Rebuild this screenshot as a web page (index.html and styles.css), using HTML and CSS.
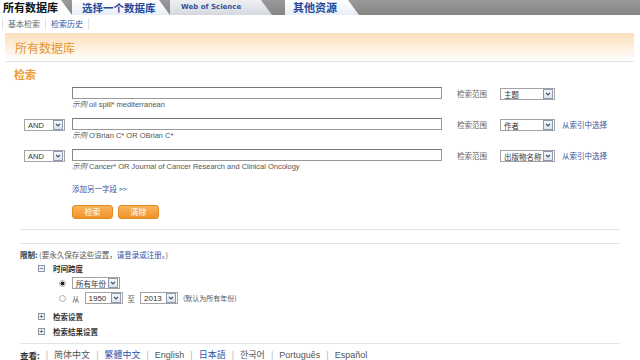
FILE: index.html
```html
<!DOCTYPE html>
<html lang="zh-CN">

<head>
    <meta charset="UTF-8" />
    <meta name="viewport" content="width=device-width, initial-scale=1.0" />
    <title>所有数据库 - 基本检索</title>
    <link rel="stylesheet" href="styles.css">
</head>

<body>
    <!-- 顶部标签 -->
    <div class="tabs">
        <a class="tab active">所有数据库</a>
        <a class="tab pick">选择一个数据库</a>
        <a class="tab wos">Web of Science</a>
        <a class="tab other">其他资源</a>
    </div>

    <div class="subtabs">
        <a class="cur">基本检索</a>
        <a>检索历史</a>
    </div>

    <div class="banner">所有数据库</div>

    <div class="main">
        <h2 class="title">检索</h2>

        <div class="rows">
            <div class="row">
                <div class="op"></div>
                <div class="field">
                    <div class="input"></div>
                    <div class="eg"><i>示例</i> oil spill* mediterranean</div>
                </div>
                <span class="scope">检索范围</span>
                <span class="sel sel-scope"><span class="val">主题</span><span class="arrow"><svg viewBox="0 0 10 10"><path d="M2.5 3.5 L5 6.2 L7.5 3.5" /></svg></span></span>
            </div>
            <div class="row">
                <span class="sel op"><span class="val">AND</span><span class="arrow"><svg viewBox="0 0 10 10"><path d="M2.5 3.5 L5 6.2 L7.5 3.5" /></svg></span></span>
                <div class="field">
                    <div class="input"></div>
                    <div class="eg"><i>示例</i> O'Brian C* OR OBrian C*</div>
                </div>
                <span class="scope">检索范围</span>
                <span class="sel sel-scope"><span class="val">作者</span><span class="arrow"><svg viewBox="0 0 10 10"><path d="M2.5 3.5 L5 6.2 L7.5 3.5" /></svg></span></span>
                <a class="link">从索引中选择</a>
            </div>
            <div class="row">
                <span class="sel op"><span class="val">AND</span><span class="arrow"><svg viewBox="0 0 10 10"><path d="M2.5 3.5 L5 6.2 L7.5 3.5" /></svg></span></span>
                <div class="field">
                    <div class="input"></div>
                    <div class="eg"><i>示例</i> Cancer* OR Journal of Cancer Research and Clinical Oncology</div>
                </div>
                <span class="scope">检索范围</span>
                <span class="sel sel-scope"><span class="val">出版物名称</span><span class="arrow"><svg viewBox="0 0 10 10"><path d="M2.5 3.5 L5 6.2 L7.5 3.5" /></svg></span></span>
                <a class="link">从索引中选择</a>
            </div>
        </div>

        <a class="add">添加另一字段 &gt;&gt;</a>

        <div class="buttons">
            <button class="btn">检索</button>
            <button class="btn">清除</button>
        </div>

        <hr class="rule" />
        <hr class="rule second" />

        <div class="limits">
            <b>限制:</b> (要永久保存这些设置，<a>请登录或注册</a>。)
        </div>
        <div class="group"><span class="box">−</span><b>时间跨度</b></div>
        <div class="opt">
            <span class="radio on"></span>
            <span class="sel sel-all"><span class="val">所有年份</span><span class="arrow"><svg viewBox="0 0 10 10"><path d="M2.5 3.5 L5 6.2 L7.5 3.5" /></svg></span></span>
        </div>
        <div class="opt">
            <span class="radio"></span>
            <span class="word">从</span>
            <span class="sel sel-year"><span class="val">1950</span><span class="arrow"><svg viewBox="0 0 10 10"><path d="M2.5 3.5 L5 6.2 L7.5 3.5" /></svg></span></span>
            <span class="word">至</span>
            <span class="sel sel-year"><span class="val">2013</span><span class="arrow"><svg viewBox="0 0 10 10"><path d="M2.5 3.5 L5 6.2 L7.5 3.5" /></svg></span></span>
            <span class="note">(默认为所有年份)</span>
        </div>
        <div class="group closed"><span class="box">+</span><b>检索设置</b></div>
        <div class="group closed"><span class="box">+</span><b>检索结果设置</b></div>

        <hr class="rule foot-rule" />

        <div class="langs">
            <b>查看:</b>
            <span class="sep">|</span><span class="cur">简体中文</span>
            <span class="sep">|</span><a>繁體中文</a>
            <span class="sep">|</span><span class="cur">English</span>
            <span class="sep">|</span><a>日本語</a>
            <span class="sep">|</span><span class="cur">한국어</span>
            <span class="sep">|</span><span class="cur">Português</span>
            <span class="sep">|</span><span class="cur">Español</span>
        </div>
    </div>
</body>

</html>
```

FILE: styles.css
```css
html {
    box-sizing: border-box;
}

*,
*:before,
*:after {
    box-sizing: inherit;
}

body {
    margin: 0;
    width: 640px;
    height: 360px;
    overflow: hidden;
    font-family: "Liberation Sans", "Noto Sans CJK SC", sans-serif;
    font-size: 8px;
    color: #555;
    background: #fff;
}

a {
    color: #3453a3;
    text-decoration: none;
}

/* 顶部标签 */
.tabs {
    display: flex;
    height: 15px;
    overflow: hidden;
    background: linear-gradient(#9a9a9a, #858585);
}

.tab {
    display: flex;
    flex-shrink: 0;
    align-items: center;
    height: 15px;
    padding: 0 10px 0 10px;
    white-space: nowrap;
    font-family: "Noto Sans CJK SC", sans-serif;
    font-weight: bold;
    font-size: 10.5px;
    line-height: 15px;
    color: #28489a;
    background: linear-gradient(#fff, #e9eef6);
    clip-path: polygon(0 0, calc(100% - 11px) 0, 100% 100%, 0 100%);
}

.tab.active {
    width: 72px;
    padding-left: 3px;
    font-size: 11px;
    color: #111;
    background: #fff;
}

.tab.pick {
    width: 98px;
}

.tab.wos {
    width: 102px;
    padding-left: 11px;
    font-family: "DejaVu Sans", sans-serif;
    font-size: 7px;
    color: #34539a;
    background: linear-gradient(#eef0f3, #d5d9df);
}

.tab.other {
    width: 74px;
    margin-left: 13px;
    padding-left: 8px;
    font-size: 11px;
}

.subtabs {
    display: flex;
    align-items: center;
    height: 18px;
    padding-left: 2px;
    font-family: "Noto Sans CJK SC", sans-serif;
    font-size: 8px;
}

.subtabs a {
    padding: 0 5px;
    line-height: 12px;
    border-left: 1px solid #e4e4e4;
    border-right: 1px solid #e4e4e4;
}

.subtabs a+a {
    border-left: 0;
}

.subtabs .cur {
    color: #666;
}

.banner {
    display: flex;
    align-items: center;
    height: 29px;
    margin: 0 6px 0 5px;
    padding-left: 10px;
    font-family: "Noto Sans CJK SC", sans-serif;
    font-size: 12px;
    color: #e8952f;
    background: linear-gradient(#fcdfba, #fef3e4 60%, #fff);
    border-bottom: 1px solid #e3e3e3;
}

.main {
    padding: 0 10px 0 14px;
}

.title {
    margin: 6px 0 0;
    font-family: "Noto Sans CJK SC", sans-serif;
    font-size: 11px;
    line-height: 12px;
    color: #ea9a36;
}

/* 检索行 */
.rows {
    margin-top: 7px;
}

.row {
    display: flex;
    align-items: flex-start;
    height: 31px;
}

.op {
    width: 41px;
    margin: 1px 7px 0 10px;
}

.field {
    width: 370px;
}

.input {
    height: 12px;
    border: 1px solid #999;
    border-top-color: #777;
    border-left-color: #888;
}

.eg {
    margin-top: 1px;
    font-size: 7.5px;
    line-height: 9px;
    color: #555;
}

.eg i {
    color: #666;
}

.scope {
    width: 43px;
    margin: 1px 0 0 15px;
    line-height: 12px;
    font-family: "Noto Sans CJK SC", sans-serif;
    font-size: 7.5px;
    color: #666;
}

.sel {
    display: inline-flex;
    align-items: center;
    justify-content: space-between;
    height: 12px;
    padding-left: 3px;
    border: 1px solid #a3a3a3;
    background: #fff;
    font-size: 7.5px;
    color: #333;
}

.sel .val {
    white-space: nowrap;
    font-family: "Liberation Sans", "Noto Sans CJK SC", sans-serif;
}

.sel .arrow {
    display: flex;
    width: 10px;
    height: 10px;
    margin-right: 1px;
    border: 1px solid #8c9bb3;
    background: linear-gradient(#f4f6f9, #dde3eb);
}

.sel .arrow svg {
    width: 8px;
    height: 8px;
}

.sel .arrow path {
    fill: none;
    stroke: #3e4f72;
    stroke-width: 1.5;
}

.sel-scope {
    width: 55px;
    margin-top: 1px;
}

.link {
    margin: 0 0 0 7px;
    line-height: 13px;
    font-family: "Noto Sans CJK SC", sans-serif;
    font-size: 7.5px;
}

.add {
    display: block;
    margin: 4px 0 0 58px;
    line-height: 10px;
    font-family: "Noto Sans CJK SC", sans-serif;
    font-size: 7.5px;
}

.buttons {
    display: flex;
    gap: 5px;
    margin: 11px 0 0 58px;
}

.btn {
    width: 41px;
    height: 14px;
    padding: 0;
    border: 1px solid #e08a24;
    border-radius: 3px;
    background: linear-gradient(#f9b35a, #f0922a);
    color: #fff;
    font-family: "Noto Sans CJK SC", sans-serif;
    font-size: 8px;
    line-height: 12px;
}

.rule {
    height: 1px;
    margin: 10px 10px 0 6px;
    border: 0;
    background: #e3e3e3;
}

.rule.second {
    margin-top: 13px;
}

/* 限制 */
.limits {
    margin: 6px 0 0 6px;
    line-height: 10px;
    font-family: "Noto Sans CJK SC", sans-serif;
    font-size: 7.5px;
    color: #555;
}

.limits b {
    color: #333;
}

.group {
    display: flex;
    align-items: center;
    height: 10px;
    margin: 3px 0 0 24px;
    font-family: "Noto Sans CJK SC", sans-serif;
    font-size: 7.5px;
    color: #333;
}

.group.closed {
    margin-top: 5px;
}

.box {
    display: flex;
    align-items: center;
    justify-content: center;
    width: 7px;
    height: 7px;
    margin-right: 8px;
    border: 1px solid #8a96a8;
    background: #eef1f5;
    font-size: 7px;
    line-height: 1;
    color: #223;
}

.opt {
    display: flex;
    align-items: center;
    gap: 5px;
    height: 10px;
    margin: 5px 0 0 45px;
    font-family: "Noto Sans CJK SC", sans-serif;
    font-size: 7.5px;
}

.radio {
    width: 7px;
    height: 7px;
    margin-right: 1px;
    border: 1px solid #aaa;
    border-radius: 50%;
    background: #fff;
}

.radio.on {
    background: radial-gradient(circle, #222 0 1.8px, #fff 2.2px);
}

.sel-all {
    width: 48px;
}

.sel-year {
    width: 38px;
    font-size: 8px;
}

.opt + .group {
    margin-top: 8px;
}

.note {
    font-size: 7px;
}

.foot-rule {
    margin-top: 7px;
}

/* 语言 */
.langs {
    display: flex;
    align-items: center;
    margin: 5px 0 0 6px;
    line-height: 12px;
    font-family: "Liberation Sans", "Noto Sans CJK SC", sans-serif;
    font-size: 9px;
    color: #555;
}

.langs b {
    font-family: "Noto Sans CJK SC", sans-serif;
    font-size: 8.5px;
    color: #333;
}

.langs .sep {
    padding: 0 6px;
    color: #bbb;
}

.langs .cur {
    color: #555;
}
```
